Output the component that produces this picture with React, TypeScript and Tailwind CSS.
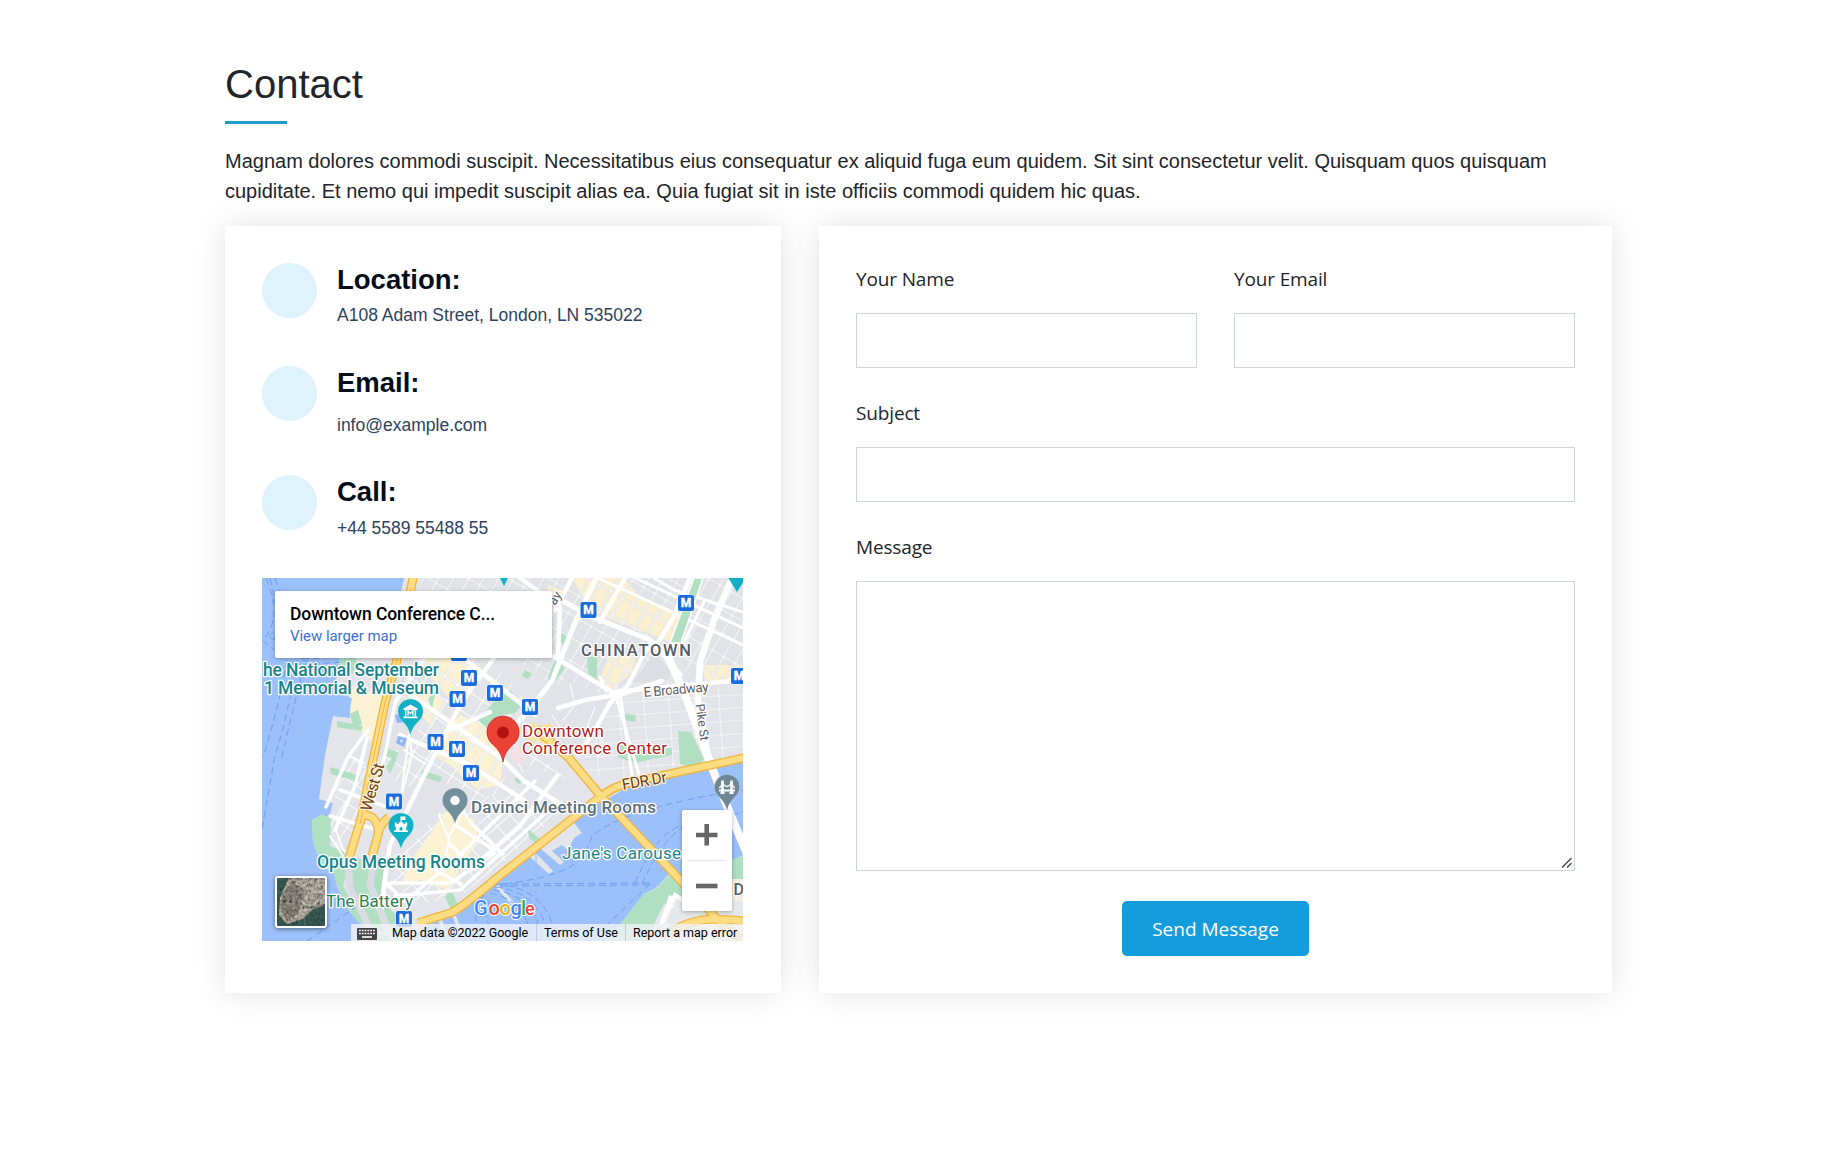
import React from "react";

const metroStops: [number, number][] = [
  [469, 678], [457.5, 699], [495, 693], [435.5, 742], [457, 749], [459, 653], [588.5, 610],
  [686, 603], [739, 676], [530, 707], [471, 773], [394, 801.5], [404, 919],
];

type LabelProps = {
  x: number; y: number; w?: number; size?: number; weight?: number; color: string;
  rotate?: number; halo?: string; children: string;
};

function Label({ x, y, w, size = 17, weight = 500, color, rotate = 0, halo = "#fff", children }: LabelProps) {
  return (
    <text
      x={x} y={y} textLength={w} fontSize={size} fontWeight={weight} fill={color}
      stroke={halo} strokeWidth={2.6} strokeLinejoin="round" paintOrder="stroke"
      transform={rotate ? `rotate(${rotate} ${x} ${y})` : undefined}
    >
      {children}
    </text>
  );
}

function Pin({ x, y, color, children }: { x: number; y: number; color: string; children?: React.ReactNode }) {
  return (
    <g transform={`translate(${x} ${y})`}>
      <path d="M0 23.500C-1.500 17-4.500 13.500-8.800 9A12.600 12.600 0 1 1 8.800 9C4.500 13.500 1.500 17 0 23.500Z" fill={color} stroke="#fff" strokeOpacity=".4" strokeWidth=".5" />
      {children}
    </g>
  );
}

type GridProps = { id: string; w: number; h: number; angle: number; land: string; line?: number; ox?: number; oy?: number };

function Grid({ id, w, h, angle, land, line = 1.8, ox = 0, oy = 0 }: GridProps) {
  return (
    <pattern id={id} width={w} height={h} patternUnits="userSpaceOnUse" patternTransform={`translate(${ox} ${oy}) rotate(${angle})`}>
      <rect width={w} height={h} fill="#fff" />
      <rect x={line / 2} y={line / 2} width={w - line} height={h - line} fill={land} stroke="#d5d8dd" strokeWidth=".6" />
    </pattern>
  );
}

const highways = [
  "M414 574L409 597L397 660L385 703L373 760L360 824",
  "M360 822L349 858",
  "M362 815Q379 814 378 835L372 856",
  "M378 834Q380 824 389 817",
  "M536 729L568 757L600 795L682 882L720 922L748 945",
  "M418 923L450 913Q458 911 498 877L600 797Q614 786 632 782L748 757",
  "M668 935Q684 921 712 919L748 921",
];

function CityMap() {
  return (
    <svg className="block h-full w-full" viewBox="262 578 481 363" fontFamily="Roboto, sans-serif">
      <defs>
        <Grid id="soho" w={13} h={20} angle={30} land="#e1e3e8" ox={556} oy={583} />
        <Grid id="soho-shops" w={13} h={20} angle={30} land="#fbf0cf" ox={556} oy={583} />
        <Grid id="les" w={25} h={13} angle={-4} land="#e3e5ea" ox={618} oy={690} />
        <Grid id="fidi" w={15} h={20} angle={33} land="#e3e5ea" line={2} ox={420} oy={660} />
        <Grid id="fidi-shops" w={15} h={20} angle={33} land="#fcf2d4" line={2} ox={420} oy={660} />
        <Grid id="port" w={17} h={14} angle={-42} land="#e3e5ea" line={2} ox={450} oy={850} />
        <Grid id="brooklyn" w={13} h={18} angle={22} land="#e6e8eb" ox={680} oy={890} />
        <filter id="terrain" x="0" y="0" width="100%" height="100%">
          <feTurbulence type="fractalNoise" baseFrequency=".32" numOctaves="4" seed="8" />
          <feColorMatrix values=".8 .3 0 0 -.2 .75 .3 0 0 -.2 .65 .3 0 0 -.19 0 0 0 0 1" />
        </filter>
      </defs>

      <rect x="262" y="578" width="481" height="363" fill="#9cc0f9" />

      {/* Lower Manhattan */}
      <path d="M404 578H743V760L632 784L606 800L574 818L575 824L582 833L574 838L568 850L562 845L552 851L564 862L560 865L541 849L535 852L553 871L549 874L528 855L498 880L458 914L424 926L412 941H385L366 930L349 911L337 886L334 873L322 866L313 842L312 820L321 815L331 817L335 804L319 799L325 755L333 716L350 718L349 696L334 694L340 655L388 650Z" fill="#e3e5ea" />

      {/* Commercial and residential blocks */}
      <path d="M340 682L386 698L376 745L352 724L350 696Z" fill="#fcf2d4" />
      <path d="M420 578H610L660 650L628 690L600 699L548 680L500 650L420 650Z" fill="url(#soho)" />
      <path d="M610 578H743V690H690L676 640L640 610Z" fill="url(#soho)" />
      <path d="M572 578L625 578L640 598L678 612L688 622L672 642L625 625L590 610ZM612 650L636 657L632 672L611 691L600 678ZM548 585L566 592L560 604L548 600Z" fill="url(#soho-shops)" />
      <path d="M702 665H743V681L706 684Z" fill="url(#soho-shops)" />
      <path d="M600 700L662 681L743 680V758L632 783L590 775L568 745Z" fill="url(#les)" />
      <path d="M402 650L480 650L530 705L510 730L566 779L536 808L455 820L405 798L384 760Z" fill="url(#fidi)" />
      <path d="M404 650L460 650L482 680L452 701L433 680ZM418 682L445 700L432 728L408 698ZM460 715L495 727L505 743L500 785L478 790L450 765L428 752Z" fill="url(#fidi-shops)" />
      <path d="M438 808L507 792L563 810L500 865L455 900L395 903L384 876L414 842Z" fill="url(#port)" />
      <path d="M431 833L446 811L474 819L478 840L448 890L421 880L401 884L416 853Z" fill="#fcf2d4" />
      <path d="M342 762L372 757L355 850L338 847L328 824Z" fill="url(#fidi)" />

      {/* Civic superblocks */}
      <path d="M566 680L608 698L598 724L577 759L535 737L538 705Z" fill="#e1e3e8" />
      <path d="M504 757L566 779L536 810L505 780Z" fill="#e3e5ea" />
      <path d="M404 790L440 768L451 794L433 822L414 830L402 818Z" fill="#e1e3e8" />
      <path d="M389 710L422 720L410 752L382 748Z" fill="#e1e3e8" />
      <path d="M632 682L655 653L671 672L668 680Z" fill="#dcdee4" />

      {/* Parks */}
      <g fill="#b0dfc1">
        <path d="M340 656L357 658L353 674L339 667ZM350 714L358 710L362 724L354 728ZM337 721L363 726L361 731L337 727ZM385 747L399 753L394 759L382 755ZM330 767L360 776L359 782L331 774ZM422 770L442 777L440 782L422 777Z" />
        <path d="M478 720L500 695L510 690L522 705L515 713L497 716L490 731Z" />
        <path d="M562 633L572 639L566 647L558 640ZM587 657L597 657V680L588 674ZM548 676L556 658L565 668L550 688ZM525 670L532 674L528 679L522 676ZM624 714L636 715L635 722L624 720Z" />
        <path d="M678 731L691 732L704 759L698 768L680 764ZM620 744L640 749L672 748L672 755L634 763L618 757ZM428 699L436 690L432 709ZM520 774L524 779L519 784L514 780Z" />
        <path d="M321 815L331 817L330 846L344 852L348 870L343 886L358 913L380 935L390 934L374 903L358 884L369 858L384 867L380 895L389 909L404 922L412 941H385L366 930L349 911L337 886L334 873L322 866L313 842L312 820Z" />
        <path d="M350 857L374 862L383 875L380 900L404 922L398 934L376 930L351 905Z" />
        <path d="M445 897L451 889L458 905L452 912ZM386 767L393 756L397 758L390 774ZM528 829L541 840L537 844L529 838Z" />
      </g>

      {/* Brooklyn waterfront */}
      <path d="M743 855L730 862L719 875H681L668 875L656 888L644 894L622 922L606 941H743Z" fill="#e6e8eb" />
      <path d="M669 875L684 885L681 900L665 905L658 886ZM718 864L743 856V890L716 890Z" fill="#b0dfc1" />
      <path d="M660 887L668 896L655 922L650 941H606L622 922L644 894Z" fill="#b0dfc1" />
      <path d="M669 895L700 905L743 922V941H655Z" fill="url(#brooklyn)" />
      <path d="M696 923H743V941H680Z" fill="#fcf2d4" />
      <path d="M730 879H745V901H730Z" fill="#f5f0e4" />
      <path d="M663 922L675 895L683 900M671 896L661 925" fill="none" stroke="#fff" strokeWidth="4" />
      <path d="M497 886L515 906M454 916L463 936M440 920L444 930" stroke="#e4e6eb" strokeWidth="3.500" />
      <path d="M334 695L352 698L349 714L346 711L344 717L340 712L338 717L332 714Z" fill="#9cc0f9" />

      {/* Ferry routes */}
      <g fill="none" stroke="#6f9ff1" strokeWidth="1" strokeDasharray="7 4">
        <path d="M266 578Q283 618 263 640Q284 664 330 657M275 578Q290 622 268 637Q300 650 342 640M270 578Q282 625 273 642Q300 668 340 662" />
        <path d="M297 660Q286 725 275 755L262 830M287 660Q278 710 263 757M304 665L281 760" />
        <path d="M500 884L652 883M500 886L655 885M505 884Q570 875 580 858Q590 845 592 836Q624 808 743 790M650 884L590 941M642 884Q662 840 682 828L743 812M635 883Q655 835 680 826" />
        <path d="M495 884Q550 888 556 941M495 887Q543 892 549 941M493 890Q536 895 542 941M490 893Q527 900 532 941M484 895Q465 920 490 941M490 900Q478 920 502 941" />
        <path d="M307 941L360 904" />
      </g>
      <path d="M536 850V924" stroke="#92b8f4" strokeWidth="1" />

      {/* Main streets */}
      <g fill="none" stroke="#fff" strokeLinecap="round" strokeLinejoin="round">
        <path strokeWidth="5" d="M552 595L590 616L650 640L664 655L680 675" />
        <path strokeWidth="8" d="M666 652L687 700L711 765L727 806L752 866" />
        <path strokeWidth="6.500" d="M732 578L714 620L700 662L698 700L708 757" />
        <path strokeWidth="5" d="M597 576L574 625L552 681L529 710L510 731" />
        <path strokeWidth="4.500" d="M573 576L555 610M520 578L560 607L558 655M625 578L600 622M690 578L673 618L659 641L646 650L628 685L610 703L592 735L578 754" />
        <path strokeWidth="4.500" d="M553 656L612 692L743 680M558 708L585 700L622 694L662 681" />
        <path strokeWidth="3" d="M620 693L632 775M617 700L640 778M598 578L743 645M635 578L743 628M654 578L674 590L743 612M705 600L680 650M600 677L606 691" />
        <path strokeWidth="4.500" d="M500 650L462 701L425 774L390 845L384 885L381 915M460 655L535 715M404 690L500 757L524 781L578 815M400 735L470 765L525 801M450 730L490 712M557 776L520 826L470 870" />
        <path strokeWidth="3.500" d="M384 882L405 901L455 860L535 781M390 883H450L495 853M395 896L460 890L550 809M455 825L491 848M449 843L475 869M433 869L461 884M472 824L503 854M430 650L395 703L386 750L373 801M367 738L355 786L335 830M340 790L384 806M330 816L378 830M326 807L348 757L368 730" />
        <path strokeWidth="2" d="M439 815L449 839L446 855L460 867M464 810L448 838M455 797L471 823M410 740L412 755L403 790M409 735L400 804M404 750L425 764M349 756L364 763M336 830L343 850L356 858M330 836L343 856" />
        <path strokeWidth="1.200" strokeOpacity=".8" d="M570 684L575 705L563 720M595 707L587 727L603 742M552 715L563 731L583 738M506 765L530 785M513 752L523 772" />
      </g>
      <path d="M694 578H703L681 643H670Z" fill="#b0dfc1" stroke="#fff" strokeWidth="1.500" />

      {/* Tunnel under the Battery */}
      <path d="M348 857L350 888L376 941M376 850L370 884L392 941" fill="none" stroke="#dadce4" strokeWidth="7" strokeLinejoin="round" />

      {/* Highways */}
      <path d="M530 724L545 732L539 738L550 745M520 728L535 742" fill="none" stroke="#fbe3a0" strokeWidth="5" />
      <path d="M541 728L549 726L551 733" fill="none" stroke="#fddd83" strokeWidth="4" />
      <g fill="none" strokeLinejoin="round">
        {highways.map((d) => <path key={d} d={d} stroke="#f1b43c" strokeWidth="9" />)}
        {highways.map((d) => <path key={d} d={d} stroke="#fddd83" strokeWidth="6.400" />)}
        <path d="M411 588L397 660L385 703L373 760L360 824" stroke="#eeb84c" strokeWidth="1" />
      </g>
      <path d="M395 715l8-1 1 8-7 1zM398 736l9 2-3 9-8-4z" fill="#8db5f7" />
      <circle cx="401.500" cy="741" r="1.500" fill="#dce7fc" />
      <path d="M516 745L528 750L521 765L510 757Z" fill="#f7e0e2" />

      {metroStops.map(([x, y]) => (
        <g key={`${x}-${y}`}>
          <rect x={x - 8.500} y={y - 8.500} width="17" height="17" rx="3" fill="#fff" fillOpacity=".6" />
          <rect x={x - 8} y={y - 8} width="16" height="16" rx="2" fill="#1a6bdc" />
          <text x={x} y={y + 4.300} fontSize="12" fontWeight="800" fill="#fff" stroke="#fff" strokeWidth=".3" textAnchor="middle">M</text>
        </g>
      ))}

      <path d="M499 576H509L504 586ZM727 576H747L737 592Z" fill="#12b0c4" />

      <Pin x={410.500} y={711.500} color="#12b0c4">
        <path d="M0-7L7-3V-1.500H-7V-3ZM-7 5H7V6.800H-7ZM-5.600-1.500H-4.100V5H-5.600ZM4.100-1.500H5.600V5H4.100Z" fill="#fff" />
        <path d="M-2.400 4V-.5L0 2L2.400-.5V4" fill="none" stroke="#fff" strokeWidth="1.400" />
      </Pin>
      <Pin x={401} y={825.500} color="#12b0c4">
        <path fillRule="evenodd" d="M-.6-9H4.500V-5.500H.8V-3H2.500V-1.500H4.200V-3H6.200V1H5.200V5H7V6.500H-7V5H-5.200V1H-6.200V-3H-4.200V-1.500H-2.500V-3H-.6ZM-1.500 5H1.500V2.500Q0 .5-1.500 2.500Z" fill="#fff" />
      </Pin>
      <Pin x={455} y={800.500} color="#738f9e"><circle r="4.700" fill="#fff" /></Pin>
      <Pin x={727} y={787} color="#6f8794">
        <path d="M-4.500-6.500V6.500M4.500-6.500V6.500" stroke="#fff" strokeWidth="2.600" />
        <path d="M-8 3.500H8M-6.500 6H-2.500M2.500 6H6.500" stroke="#fff" strokeWidth="1.800" />
        <path d="M-8 1Q-6 0-4.500-4Q0 3 4.500-4Q6 0 8 1" fill="none" stroke="#fff" strokeWidth="1.300" />
      </Pin>
      <g transform="translate(503 732.5)">
        <path d="M0 29.500C-1.500 21-4.500 17.500-9.500 12.500A16 16 0 1 1 9.500 12.500C4.500 17.500 1.500 21 0 29.500Z" fill="#ea4335" stroke="#c5221f" strokeWidth=".8" />
        <circle r="6" fill="#b31412" />
      </g>

      <Label x={263} y={676} w={176} size={17.500} color="#17838b">he National September</Label>
      <Label x={264} y={694} w={175} size={17.500} color="#17838b">1 Memorial &amp; Museum</Label>
      <Label x={317} y={867.500} w={168} size={17.500} color="#17838b">Opus Meeting Rooms</Label>
      <Label x={326} y={906.500} w={87} color="#2e8054" weight={400}>The Battery</Label>
      <Label x={471} y={812.500} w={185} color="#5a7080">Davinci Meeting Rooms</Label>
      <Label x={562} y={858.500} w={119} color="#1c8790" weight={400}>{"Jane's Carouse"}</Label>
      <Label x={522} y={737} w={82} color="#b01c1c" weight={400}>Downtown</Label>
      <Label x={522} y={754} w={145} color="#b01c1c" weight={400}>Conference Center</Label>
      <Label x={581} y={656} w={110} size={16.500} color="#565b64">CHINATOWN</Label>
      <Label x={644} y={697} w={65} size={13.500} weight={400} rotate={-5} color="#5a5e64">E Broadway</Label>
      <Label x={695.500} y={704.500} w={37} size={12.500} weight={400} rotate={82} color="#5a5e64">Pike St</Label>
      <Label x={371} y={812} w={49} size={16} weight={400} rotate={-74} color="#6d3f1e" halo="#fff3cf">West St</Label>
      <Label x={623} y={790} w={45} size={15.500} weight={400} rotate={-10} color="#6d3f1e" halo="#fff3cf">FDR Dr</Label>
      <Label x={555} y={606} size={13} weight={400} rotate={-58} color="#5a5e64">ay</Label>
      <Label x={733.500} y={895} w={10} size={16} color="#5a5e64">D</Label>

      <g fontSize="20" fontWeight="500" stroke="#fff" strokeWidth="2" paintOrder="stroke">
        <text x="474" y="915">
          <tspan fill="#4285f4">G</tspan><tspan x="488.500" fill="#ea4335">o</tspan><tspan x="499.500" fill="#e9b308">o</tspan><tspan x="510.500" fill="#4285f4">g</tspan><tspan x="521" fill="#34a853">l</tspan><tspan x="525" fontSize="18" fill="#ea4335">e</tspan>
        </text>
      </g>
    </svg>
  );
}

function MapWidget() {
  return (
    <div className="relative h-[363px] w-[481px] overflow-hidden font-['Roboto',sans-serif]">
      <CityMap />
      <div className="absolute left-[13px] top-[13px] h-[67px] w-[277px] rounded-[2px] bg-white pl-[15px] pt-[13px] shadow-[0_1px_4px_rgba(0,0,0,0.3)]">
        <div className="whitespace-nowrap text-[17.5px] font-medium leading-[20px] tracking-[-0.09px] text-black">Downtown Conference C...</div>
        <a className="block pt-[3px] text-[15px] leading-[18px] tracking-[-0.05px] text-[#3d70d6]">View larger map</a>
      </div>

      <div className="absolute left-[13px] top-[298px] h-[52px] w-[52px] overflow-hidden rounded-[3px] border-2 border-white shadow-[0_1px_4px_rgba(0,0,0,0.5)]">
        <svg viewBox="0 0 48 48" className="block h-full w-full">
          <rect width="48" height="48" filter="url(#terrain)" />
          <path d="M0 0H12L7 10L3 20L2 37L10 46L26 41L37 29L48 26V48H0Z" fill="#173f3b" fillOpacity=".78" />
          <path d="M3 37L9 44L25 40L35 31L46 27" fill="none" stroke="#a39b86" strokeWidth="2" strokeOpacity=".6" />
          <path d="M5 15L15 4L28 12L21 36L10 42L4 34Z" fill="#3b3833" fillOpacity=".35" />
          <path d="M0 15H48M28 0V48" stroke="#ccc" strokeOpacity=".25" />
        </svg>
      </div>

      <div className="absolute left-[420px] top-[232px] flex h-[101px] w-[50px] flex-col items-center rounded-[2px] bg-white shadow-[0_1px_4px_rgba(0,0,0,0.3)]">
        <svg className="h-[50px] w-[50px]" viewBox="0 0 50 50"><path d="M14 25H35.500M24.700 14V35.500" stroke="#666" strokeWidth="4.600" /></svg>
        <div className="h-px w-[38px] bg-[#e6e6e6]" />
        <svg className="h-[50px] w-[50px]" viewBox="0 0 50 50"><path d="M14 25H35.500" stroke="#666" strokeWidth="4.600" /></svg>
      </div>

      <div className="absolute bottom-0 right-0 flex h-[17px] w-[392px] items-center whitespace-nowrap bg-[#f0f3f8]/80 text-[12.5px] leading-[17px] text-black">
        <svg className="ml-[6px] mt-[2px] h-[12px] w-[20px] shrink-0" viewBox="0 0 20 12">
          <rect width="20" height="12" rx="1" fill="#444" />
          <path d="M2 2.500H18M2 5.500H18" stroke="#fff" strokeWidth="1.600" strokeDasharray="1.800 1" />
          <path d="M5 9H15" stroke="#fff" strokeWidth="1.600" />
        </svg>
        <span className="ml-[15px] w-[136px]">Map data ©2022 Google</span>
        <span className="ml-[8px] h-full w-[89px] border-l border-[#bccbe4] pl-[7px]">Terms of Use</span>
        <span className="h-full border-l border-[#bccbe4] pl-[7px]">Report a map error</span>
      </div>
    </div>
  );
}

function InfoItem({ title, text, className, textClass }: { title: string; text: string; className: string; textClass: string }) {
  return (
    <div className={`flex ${className}`}>
      <div className="h-[55px] w-[55px] shrink-0 rounded-full bg-[#dff3fc]" />
      <div className="pl-[20px]">
        <h4 className="text-[27.5px] font-bold leading-[33px] text-[#050d18]">{title}</h4>
        <p className={`text-[17.5px] leading-[26px] text-[#2b4261] ${textClass}`}>{text}</p>
      </div>
    </div>
  );
}

function Field({ label, multiline }: { label: string; multiline?: boolean }) {
  return (
    <label className="flex flex-1 flex-col gap-[19px]">
      <span className="pt-px text-[19px] leading-[30px] tracking-[-0.15px] text-[#212529]">{label}</span>
      {multiline ? (
        <span className="relative block">
          <textarea className="block h-[290px] w-full resize-none border border-[#ced4da] bg-white" />
          <svg className="absolute bottom-[3px] right-[3px] h-[11px] w-[11px]" viewBox="0 0 11 11">
            <path d="M1 10.500L10.500 1M6 10.500L10.500 6" stroke="#444" strokeWidth="1.300" />
          </svg>
        </span>
      ) : (
        <input className="h-[55px] w-full border border-[#ced4da] bg-white" />
      )}
    </label>
  );
}

export default function App() {
  return (
    <div className="h-[1154px] overflow-hidden bg-white pl-[225px] pt-[60px] font-['Liberation_Sans',Arial,sans-serif] text-[#212529]">
      <main className="w-[1387px]">
        <h2 className="text-[40px] leading-[48px]">Contact</h2>
        <div className="mt-[13px] h-[3px] w-[62px] bg-[#1f9bd0]" />
        <p className="mt-[22px] text-[20px] leading-[30px]">
          Magnam dolores commodi suscipit. Necessitatibus eius consequatur ex aliquid fuga eum quidem. Sit sint consectetur velit. Quisquam quos quisquam cupiditate. Et nemo qui impedit suscipit alias ea. Quia fugiat sit in iste officiis commodi quidem hic quas.
        </p>

        <div className="mt-5 flex h-[767px] justify-between">
          <section className="w-[556px] bg-white p-[37px] shadow-[0_0_30px_rgba(0,0,0,0.12)]">
            <InfoItem title="Location:" text="A108 Adam Street, London, LN 535022" className="h-[103px]" textClass="mt-[6px]" />
            <InfoItem title="Email:" text="info@example.com" className="h-[109px]" textClass="mt-[13px]" />
            <InfoItem title="Call:" text="+44 5589 55488 55" className="h-[103px]" textClass="mt-[7px]" />
            <MapWidget />
          </section>

          <form className="flex w-[793px] flex-col gap-[29px] bg-white p-[37px] font-['Open_Sans','Segoe_UI',sans-serif] shadow-[0_0_30px_rgba(0,0,0,0.12)]">
            <div className="flex gap-[37px]">
              <Field label="Your Name" />
              <Field label="Your Email" />
            </div>
            <div className="flex"><Field label="Subject" /></div>
            <div className="flex"><Field label="Message" multiline /></div>
            <button type="button" className="mt-px h-[55px] w-[187px] self-center rounded-[5px] bg-[#149ddd] pt-[2px] text-[19px] text-white">
              Send Message
            </button>
          </form>
        </div>
      </main>
    </div>
  );
}
